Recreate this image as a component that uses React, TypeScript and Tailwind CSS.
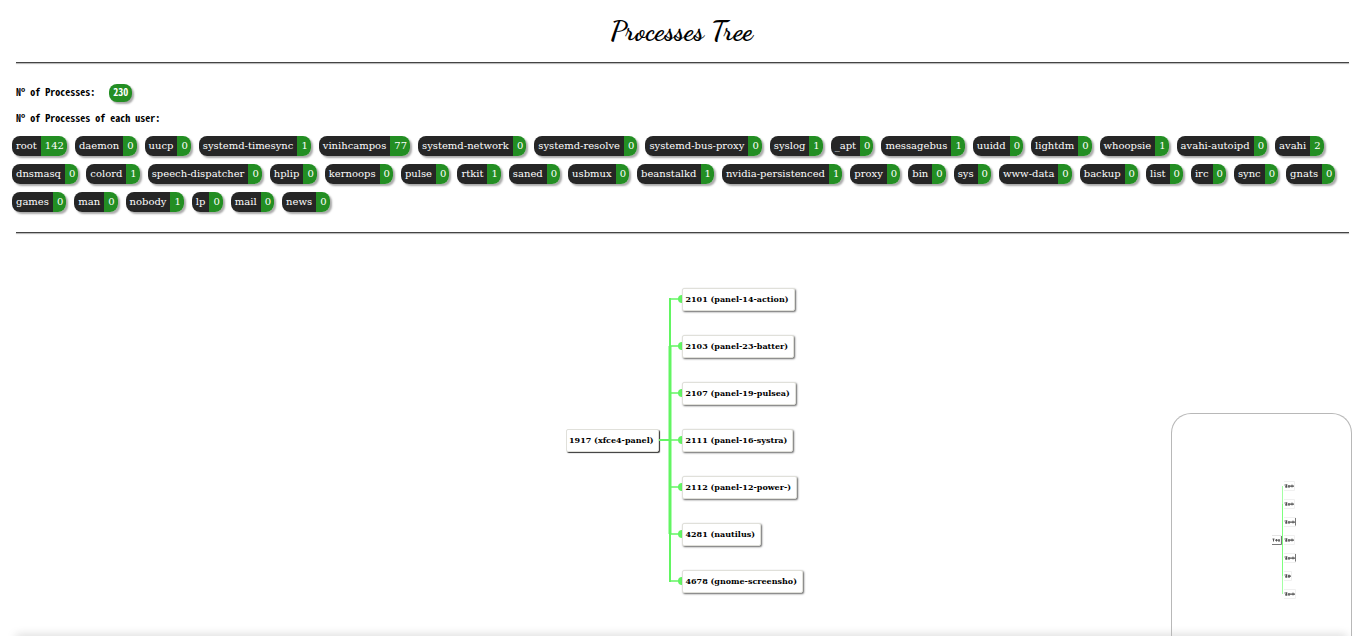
const users: [string, number][] = [
  ["root", 142], ["daemon", 0], ["uucp", 0], ["systemd-timesync", 1], ["vinihcampos", 77],
  ["systemd-network", 0], ["systemd-resolve", 0], ["systemd-bus-proxy", 0], ["syslog", 1],
  ["_apt", 0], ["messagebus", 1], ["uuidd", 0], ["lightdm", 0], ["whoopsie", 1],
  ["avahi-autoipd", 0], ["avahi", 2], ["dnsmasq", 0], ["colord", 1], ["speech-dispatcher", 0],
  ["hplip", 0], ["kernoops", 0], ["pulse", 0], ["rtkit", 1], ["saned", 0], ["usbmux", 0],
  ["beanstalkd", 1], ["nvidia-persistenced", 1], ["proxy", 0], ["bin", 0], ["sys", 0],
  ["www-data", 0], ["backup", 0], ["list", 0], ["irc", 0], ["sync", 0], ["gnats", 0],
  ["games", 0], ["man", 0], ["nobody", 1], ["lp", 0], ["mail", 0], ["news", 0],
];

const children = [
  "2101 (panel-14-action)",
  "2103 (panel-23-batter)",
  "2107 (panel-19-pulsea)",
  "2111 (panel-16-systra)",
  "2112 (panel-12-power-)",
  "4281 (nautilus)",
  "4678 (gnome-screensho)",
];

const PITCH = 47;

function UserBadge({ name, count }: { name: string; count: number }) {
  return (
    <li className="flex h-5 overflow-visible rounded-lg text-[10px] leading-5 text-white shadow-[2px_2px_2px_#aaa]">
      <span className="rounded-l-lg bg-[#262626] px-1">{name}</span>
      <span className="rounded-r-lg bg-[#238e23] pr-[3px] pl-1">{count}</span>
    </li>
  );
}

function Node({ label, root = false }: { label: string; root?: boolean }) {
  return (
    <div
      className={
        "flex h-[23px] items-center rounded-xs border border-[#e0e0da] bg-white pr-[5px] pb-px pl-[2px] text-[8px] font-bold whitespace-nowrap text-black " +
        (root ? "shadow-[1px_1px_1px_#333]" : "shadow-[1px_1px_2px_#666]")
      }
    >
      {label}
    </div>
  );
}

function Connectors() {
  const last = (children.length - 1) * PITCH + 11;
  return (
    <svg width="23" height="305" className="shrink-0" aria-hidden="true">
      <g stroke="#62f562" fill="none">
        <path d={`M11 10V${last + 1}`} strokeWidth="2" />
        <path d={`M11 ${PITCH + 11}V${last - PITCH}`} strokeWidth="3" />
        <path d={`M0 ${3 * PITCH + 11}H11`} strokeWidth="2" />
        {children.map((c, i) => (
          <path key={c} d={`M11 ${i * PITCH + 11}H20`} strokeWidth="1.5" />
        ))}
      </g>
      {children.map((c, i) => (
        <circle key={c} cx="23" cy={i * PITCH + 11} r="4" fill="#62f562" />
      ))}
    </svg>
  );
}

function Overview() {
  const widths = [11, 11, 12, 11, 12, 8, 12];
  return (
    <svg width="26" height="120" className="absolute top-[66px] left-[99px]" aria-hidden="true">
      <path d="M11.5 6V114" stroke="#a4ffa4" />
      <path d="M11.5 24V96" stroke="#7dff7d" />
      <path d="M1 55.5H10V64.5H1" stroke="#e4e4e4" fill="none" />
      <path d="M1 64.5H10.5V56" stroke="#777" fill="none" />
      <path d="M1.5 59h2M4 60.2h5M8 59v3M2.5 59v2.5M5.5 59v2.5" stroke="#555" strokeWidth="1" />
      {widths.map((w, i) => (
        <g key={i} transform={`translate(13 ${i * 18})`} fill="none">
          <path d={`M0 1.5H${w - 0.5}V10.5H0`} stroke="#f0f0f0" />
          <path d={`M.5 5h3M1 6.8h2.5M4 6.2H${w - 1}`} stroke="#555" strokeWidth="1.2" />
          <path d={`M2.5 4.5v3M5 5v3M${w - 3} 4.6v2.8`} stroke="#555" strokeWidth="1" />
          {(i === 2 || i === 4) && <path d="M11.5 2V9.5" stroke="#777" />}
        </g>
      ))}
    </svg>
  );
}

export default function App() {
  return (
    <div className="relative flex min-h-screen flex-col overflow-hidden bg-white font-['DejaVu_Serif',serif] text-black">
      <header className="mx-4 flex h-[62px] items-center justify-center">
        <h1 className="font-['Dancing_Script','Brush_Script_MT',cursive] text-[28px] leading-8 font-bold">
          Processes Tree
        </h1>
      </header>
      <hr className="mr-[14px] ml-4 border-[#444] shadow-[0_1px_1px_#aaa]" />

      <section className="pt-[21px]">
        <div className="mx-4 font-['Noto_Sans_Mono_CJK_JP','DejaVu_Sans_Mono',monospace] text-[10px] leading-4 font-bold">
          <p className="flex h-5 gap-[14px]">
            Nº of Processes:
            <span className="h-[18px] rounded-lg bg-[#238e23] px-1 text-white shadow-[2px_2px_2px_#aaa]">230</span>
          </p>
          <p className="mt-[6px]">Nº of Processes of each user:</p>
        </div>
        <ul className="mx-3 mt-[10px] flex flex-wrap gap-2">
          {users.map(([name, count]) => (
            <UserBadge key={name} name={name} count={count} />
          ))}
        </ul>
      </section>
      <hr className="mt-5 mr-[14px] ml-4 border-[#444] shadow-[0_1px_1px_#aaa]" />

      <main className="relative flex grow justify-center pt-[55px] pl-[6px]">
        <div className="flex h-[305px] items-center">
          <Node label="1917 (xfce4-panel)" root />
          <Connectors />
          <div className="flex flex-col items-start gap-6">
            {children.map((c) => (
              <Node key={c} label={c} />
            ))}
          </div>
        </div>
        <aside className="absolute top-[180px] right-[11px] bottom-0 w-[181px] rounded-t-[20px] border border-b-0 border-[#b8b8b8]">
          <Overview />
        </aside>
      </main>
      <div className="absolute inset-x-4 -bottom-1 h-1 shadow-[0_0_10px_#bbb]" />
    </div>
  );
}
